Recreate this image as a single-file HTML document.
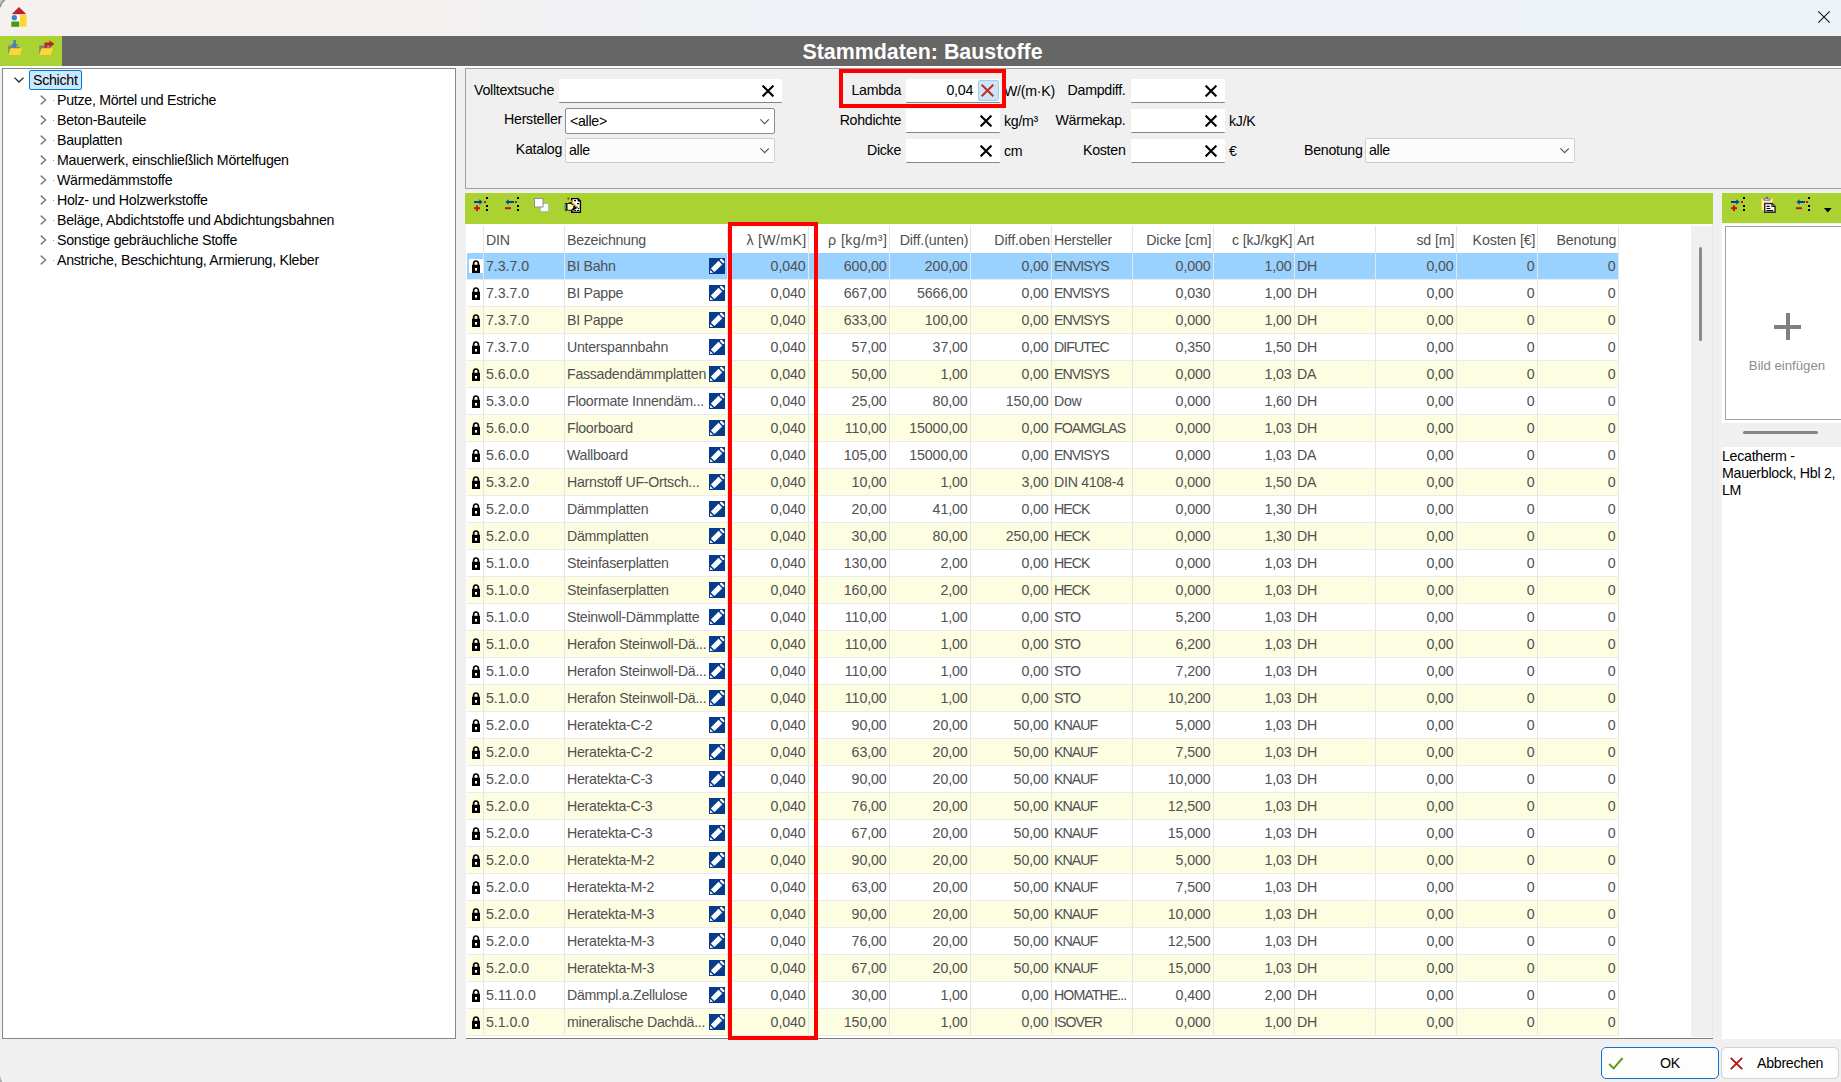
<!DOCTYPE html>
<html><head><meta charset="utf-8"><title>Stammdaten: Baustoffe</title>
<style>
*{box-sizing:border-box;margin:0;padding:0}
html,body{width:1841px;height:1082px;overflow:hidden}
body{position:relative;background:#f0f0f0;font-family:"Liberation Sans",sans-serif;font-size:14.2px;letter-spacing:-0.28px;color:#000}
.a{position:absolute}
svg{position:absolute;overflow:visible}
#tb{left:0;top:0;width:1841px;height:36px;background:linear-gradient(90deg,#f5f1ef 0%,#f5f1ee 19%,#f1f1f4 32%,#eef2f7 46%,#eef3f8 100%)}
#bar{left:0;top:36px;width:1841px;height:30px;background:#666}
#barg{left:0;top:36px;width:62px;height:30px;background:#aad332}
#wl{left:0;top:66px;width:1841px;height:2px;background:#fbfbfb}
#ttl{left:622.5px;top:36px;width:600px;height:30px;line-height:33px;text-align:center;color:#fff;font-weight:bold;font-size:21.4px;letter-spacing:0;white-space:nowrap}
#tree{left:2px;top:68px;width:454px;height:971px;background:#fff;border:1px solid #828790}
.ti{position:absolute;height:20px;line-height:20px;white-space:nowrap;left:57px}
#selbox{left:29px;top:70px;width:53px;height:20px;background:#cce8ff;border:1px solid #0078d4;border-radius:2px}
#filt{left:465px;top:68px;width:1380px;height:121px;border:1px solid #a0a0a0;border-right:0;background:#f0f0f0}
.lb{position:absolute;height:24px;line-height:24px;white-space:nowrap;text-align:right}
.in{position:absolute;height:24px;background:#fff;border-bottom:1px solid #868686;border-radius:1px}
.cb{position:absolute;height:25px;background:#fcfcfc;border:1px solid #d2d2d2;border-bottom-color:#c6c6c6;border-radius:2px;line-height:23px;padding-left:3px}
.un{position:absolute;height:24px;line-height:24px;white-space:nowrap}
.red{position:absolute;border:4px solid #fe0000}
#gbar{left:465px;top:193px;width:1248px;height:31px;background:#aad332}
#gbar2{left:1722px;top:193px;width:119px;height:30px;background:#aad332}
#tbl{left:466px;top:224px;width:1246px;height:814px;background:#fff;overflow:hidden}
#tblb{left:466px;top:1038px;width:1247px;height:1px;background:#7c7c7c}
.hd{position:absolute;top:2px;height:27px;line-height:28px;color:#505050;white-space:nowrap;overflow:hidden;font-style:normal}
.r{position:absolute;left:0;height:26px;width:1153px}
.c{position:absolute;top:0;height:26px;line-height:26px;font-style:normal;color:#505050;white-space:nowrap;overflow:hidden;padding:0 2px;background:#fff}
.y .c{background:#fdfde2}
.sel .c{background:#99d1ff}
.n{text-align:right;padding-right:2.4px;letter-spacing:-0.1px}
.hd.n{padding-right:1.6px}
.u{letter-spacing:-0.95px}
.c1{letter-spacing:-0.05px}
.c0{left:1px;width:16px}.c1{left:18px;width:80px}.c2{left:99px;width:162px}
.c3{left:262px;width:80px}.c4{left:343px;width:80px}.c5{left:424px;width:80px}.c6{left:505px;width:80px}
.c7{left:586px;width:80px}.c8{left:667px;width:80px}.c9{left:748px;width:80px}.c10{left:829px;width:80px}
.c11{left:910px;width:80px}.c12{left:991px;width:80px}.c13{left:1072px;width:80px}
.vl{position:absolute;top:2px;width:1px;height:810px;background:#e6e6e6}
.hl{position:absolute;left:1px;width:1152px;height:1px;background:#ebebeb}
.lk{position:absolute;left:5px;top:7px;width:8px;height:13px}
.sel .lk{box-shadow:none}
.lkbg{position:absolute;left:2px;top:6px;width:14px;height:14px;background:#fff}
.ed{position:absolute;left:144px;top:5px;width:16px;height:16px;background:#063b8e}
#strack{left:1691px;top:226px;width:20.5px;height:811px;background:#f0f0f0}
#sthumb{left:1699px;top:247px;width:3px;height:94px;background:#8b8b8b;border-radius:2px}
#rp1{left:1722px;top:224px;width:119px;height:199px;background:#fff}
#imgb{left:1725px;top:226px;width:130px;height:194px;border:1px solid #a0a0a0;background:#fff}
#split{left:1743px;top:431px;width:75px;height:3px;border-radius:2px;background:#858585}
#rp2{left:1722px;top:447px;width:119px;height:592px;background:#fff}
.btn{position:absolute;top:1047px;height:32px;border-radius:5px;background:#fdfdfd;line-height:30px;font-size:14.2px}
#tblr{left:1712px;top:224px;width:1px;height:814px;background:#e6e6e6}

</style></head><body>
<svg width="0" height="0" style="left:-10px;top:-10px">
<defs>
<symbol id="lk" viewBox="0 0 8 13"><path d="M1.6 5.2V3.6a2.4 2.6 0 0 1 4.8 0V5.2" fill="none" stroke="#000" stroke-width="1.7"/><rect x="0" y="4.8" width="8" height="8.2" fill="#000"/><rect x="3" y="8" width="2" height="2.6" fill="#fff"/></symbol>
<symbol id="ed" viewBox="0 0 16 16"><rect width="16" height="16" fill="#063b8e"/><polygon points="9.5,2.8 13.2,6.6 5.4,14 1.9,10.5" fill="#fff"/><polygon points="1.2,11.9 4.1,14.8 1,15" fill="#fff"/><path d="M12.2 1.9L14.3 4" stroke="#fff" stroke-width="2.3" stroke-linecap="round"/></symbol>
<symbol id="xb" viewBox="0 0 12 12"><path d="M0.6 0.6L11.4 11.4M11.4 0.6L0.6 11.4" stroke="#000" stroke-width="2.1"/></symbol>
<symbol id="chr" viewBox="0 0 7 10"><path d="M0.8 0.6L5.6 5L0.8 9.4" fill="none" stroke="#7c7c7c" stroke-width="1.45"/></symbol>
<symbol id="chd" viewBox="0 0 10 6"><path d="M0.5 0.6L5 5L9.5 0.6" fill="none" stroke="#222" stroke-width="1.3"/></symbol>
</defs></svg>
<div class="a" id="tb"></div>
<svg style="left:11px;top:7px" width="16" height="20" viewBox="0 0 16 20"><polygon points="8,0 15.6,7.4 0.4,7.4" fill="#c32026"/><rect x="0.3" y="7.4" width="15.4" height="12.4" fill="#fbfbfb"/><rect x="9" y="8" width="6.6" height="11.8" fill="#fdd835"/><circle cx="3.3" cy="10.8" r="2.7" fill="#3d85c6"/><rect x="0.3" y="14.5" width="8" height="5.3" fill="#4e9a06"/></svg>
<svg style="left:1818px;top:11px" width="12" height="12" viewBox="0 0 12 12"><path d="M0.3 0.3L11.7 11.7M11.7 0.3L0.3 11.7" stroke="#111" stroke-width="1.1" fill="none"/></svg>
<div class="a" id="bar"></div><div class="a" id="barg"></div>
<div class="a" id="wl"></div>
<div class="a" id="ttl">Stammdaten: Baustoffe</div>
<!-- bar icons -->
<svg style="left:7px;top:39px" width="18" height="18" viewBox="0 0 18 18"><polygon points="1.3,6.5 6,6.5 7,7.5 12.5,7.5 12.5,10 1.3,16" fill="#7d7d85"/><polygon points="3.4,9.2 15,9.2 13,16 1.2,16" fill="#fdd835"/><path d="M7.6 1v4.4" stroke="#3d7fc2" stroke-width="2.4"/><polygon points="4,5 11.2,5 7.6,8.8" fill="#3d7fc2"/></svg>
<svg style="left:38px;top:39px" width="18" height="18" viewBox="0 0 18 18"><polygon points="1.3,6.5 6,6.5 7,7.5 12.5,7.5 12.5,10 1.3,16" fill="#7d7d85"/><polygon points="3.4,9.2 15,9.2 13,16 1.2,16" fill="#fdd835"/><path d="M7.8 8.6V5h5" stroke="#c32026" stroke-width="2.8" fill="none"/><polygon points="11.4,1.2 16.3,5 11.4,8.8" fill="#c32026"/></svg>
<!-- tree -->
<div class="a" id="tree"></div>
<div class="a" id="selbox"></div>
<svg style="left:13.6px;top:77.1px" width="10" height="6"><use href="#chd"/></svg>
<div class="ti" style="left:33px;top:70px">Schicht</div>
<svg style="left:0;top:0" width="8" height="9" viewBox="0 0 8 9"><path d="M0 0H4.6Q1 1.8 0 7z" fill="#c9c9c9"/><path d="M0.2 7.2Q1.2 2 4.8 0" fill="none" stroke="#8e8e8e" stroke-width="1.5"/></svg>
<svg style="left:0;top:1074px" width="4" height="8" viewBox="0 0 4 8"><path d="M0 1.2Q.4 5 2.2 8H0z" fill="#a8a8a8"/></svg>
<svg style="left:40px;top:94.7px" width="7" height="10"><use href="#chr"/></svg><div class="a" style="left:53px;top:100px;width:1px;height:1px;background:#888"></div><div class="ti" style="top:90px">Putze, Mörtel und Estriche</div>
<svg style="left:40px;top:114.7px" width="7" height="10"><use href="#chr"/></svg><div class="a" style="left:53px;top:120px;width:1px;height:1px;background:#888"></div><div class="ti" style="top:110px">Beton-Bauteile</div>
<svg style="left:40px;top:134.7px" width="7" height="10"><use href="#chr"/></svg><div class="a" style="left:53px;top:140px;width:1px;height:1px;background:#888"></div><div class="ti" style="top:130px">Bauplatten</div>
<svg style="left:40px;top:154.7px" width="7" height="10"><use href="#chr"/></svg><div class="a" style="left:53px;top:160px;width:1px;height:1px;background:#888"></div><div class="ti" style="top:150px">Mauerwerk, einschließlich Mörtelfugen</div>
<svg style="left:40px;top:174.7px" width="7" height="10"><use href="#chr"/></svg><div class="a" style="left:53px;top:180px;width:1px;height:1px;background:#888"></div><div class="ti" style="top:170px">Wärmedämmstoffe</div>
<svg style="left:40px;top:194.7px" width="7" height="10"><use href="#chr"/></svg><div class="a" style="left:53px;top:200px;width:1px;height:1px;background:#888"></div><div class="ti" style="top:190px">Holz- und Holzwerkstoffe</div>
<svg style="left:40px;top:214.7px" width="7" height="10"><use href="#chr"/></svg><div class="a" style="left:53px;top:220px;width:1px;height:1px;background:#888"></div><div class="ti" style="top:210px">Beläge, Abdichtstoffe und Abdichtungsbahnen</div>
<svg style="left:40px;top:234.7px" width="7" height="10"><use href="#chr"/></svg><div class="a" style="left:53px;top:240px;width:1px;height:1px;background:#888"></div><div class="ti" style="top:230px">Sonstige gebräuchliche Stoffe</div>
<svg style="left:40px;top:254.7px" width="7" height="10"><use href="#chr"/></svg><div class="a" style="left:53px;top:260px;width:1px;height:1px;background:#888"></div><div class="ti" style="top:250px">Anstriche, Beschichtung, Armierung, Kleber</div>
<!-- filter panel -->
<div class="a" id="filt"></div>
<div class="lb" style="left:400px;width:154px;top:78px">Volltextsuche</div>
<div class="in" style="left:559px;top:79px;width:223px"></div>
<svg style="left:762px;top:85px" width="12" height="12"><use href="#xb"/></svg>
<div class="lb" style="left:400px;width:162px;top:107px">Hersteller</div>
<div class="cb" style="left:565px;top:108px;width:210px;height:26px;border-color:#8c8c8c;background:#fff;padding-left:4px;line-height:24px">&lt;alle&gt;</div>
<svg style="left:760px;top:119px" width="10" height="6" viewBox="0 0 10 6"><path d="M0.4 0.4L4.6 4.6L8.8 0.4" fill="none" stroke="#555" stroke-width="1.2"/></svg>
<div class="lb" style="left:400px;width:162px;top:137px">Katalog</div>
<div class="cb" style="left:565px;top:138px;width:210px;height:25px">alle</div>
<svg style="left:760px;top:148px" width="10" height="6" viewBox="0 0 10 6"><path d="M0.4 0.4L4.6 4.6L8.8 0.4" fill="none" stroke="#555" stroke-width="1.2"/></svg>

<div class="lb" style="left:800px;width:101px;top:78px">Lambda</div>
<div class="in" style="left:906px;top:79px;width:94px"></div>
<div class="lb" style="left:906px;width:67px;top:78px">0,04</div>
<div class="a" style="left:978px;top:80px;width:21px;height:21px;background:#cce4f7;border:1px solid #9ccbf0;border-radius:2px"></div>
<svg style="left:981px;top:84px" width="13" height="13" viewBox="0 0 13 13"><path d="M0.7 0.7L12.3 12.3M12.3 0.7L0.7 12.3" stroke="#c42b1c" stroke-width="2"/></svg>
<div class="un" style="left:1004px;top:78.5px">W/(m·K)</div>
<div class="lb" style="left:800px;width:101px;top:108px">Rohdichte</div>
<div class="in" style="left:906px;top:109px;width:94px"></div>
<svg style="left:980px;top:115px" width="12" height="12"><use href="#xb"/></svg>
<div class="un" style="left:1004px;top:108.5px">kg/m³</div>
<div class="lb" style="left:800px;width:101px;top:138px">Dicke</div>
<div class="in" style="left:906px;top:139px;width:94px"></div>
<svg style="left:980px;top:145px" width="12" height="12"><use href="#xb"/></svg>
<div class="un" style="left:1004px;top:138.5px">cm</div>

<div class="lb" style="left:1020px;width:105.5px;top:78px">Dampdiff.</div>
<div class="in" style="left:1131px;top:79px;width:94px"></div>
<svg style="left:1205px;top:85px" width="12" height="12"><use href="#xb"/></svg>
<div class="lb" style="left:1020px;width:105.5px;top:108px">Wärmekap.</div>
<div class="in" style="left:1131px;top:109px;width:94px"></div>
<svg style="left:1205px;top:115px" width="12" height="12"><use href="#xb"/></svg>
<div class="un" style="left:1229px;top:108.5px">kJ/K</div>
<div class="lb" style="left:1020px;width:105.5px;top:138px">Kosten</div>
<div class="in" style="left:1131px;top:139px;width:94px"></div>
<svg style="left:1205px;top:145px" width="12" height="12"><use href="#xb"/></svg>
<div class="un" style="left:1229px;top:138.5px">€</div>

<div class="lb" style="left:1260px;width:102.5px;top:137.5px">Benotung</div>
<div class="cb" style="left:1365px;top:138px;width:210px;height:25px">alle</div>
<svg style="left:1560px;top:148px" width="10" height="6" viewBox="0 0 10 6"><path d="M0.4 0.4L4.6 4.6L8.8 0.4" fill="none" stroke="#555" stroke-width="1.2"/></svg>
<div class="red" style="left:839px;top:69px;width:167px;height:39px"></div>
<!-- green toolbars -->
<div class="a" id="gbar"></div><div class="a" id="gbar2"></div>
<svg width="0" height="0" style="left:-20px;top:-20px"><defs>
<symbol id="iadd" viewBox="0 0 16 16"><rect x="1" y="5" width="6" height="2" fill="#0a3fa0"/><polygon points="6.4,3.3 9.5,6 6.4,8.7" fill="#0a3fa0"/><rect x="11" y="5" width="2" height="2" fill="#c4141c"/><rect x="13" y="1" width="2" height="2"/><rect x="13" y="9" width="2" height="2"/><rect x="13" y="13" width="2" height="2"/><rect x="1" y="11.2" width="6" height="2" fill="#c4141c"/><rect x="3" y="9.3" width="2" height="5.8" fill="#c4141c"/></symbol>
<symbol id="idel" viewBox="0 0 16 16"><rect x="4" y="5" width="6" height="2" fill="#0a3fa0"/><polygon points="4.6,3.3 1.5,6 4.6,8.7" fill="#0a3fa0"/><rect x="11" y="5" width="2" height="2" fill="#c4141c"/><rect x="13" y="1" width="2" height="2"/><rect x="13" y="9" width="2" height="2"/><rect x="13" y="13" width="2" height="2"/><rect x="1" y="11.2" width="6" height="2" fill="#c4141c"/></symbol>
</defs></svg>
<svg style="left:473px;top:196px" width="16" height="16"><use href="#iadd"/></svg>
<svg style="left:504px;top:196px" width="16" height="16"><use href="#idel"/></svg>
<svg style="left:533px;top:197px" width="17" height="16" viewBox="0 0 17 16"><rect x="7.5" y="6.5" width="8" height="8" fill="#fff" stroke="#b9b9b9"/><rect x="1.5" y="1.5" width="8.5" height="8.5" fill="#fff" stroke="#8e8e9a"/></svg>
<svg style="left:564px;top:196px" width="18" height="18" viewBox="0 0 18 18"><polygon points="7.7,2.6 14,2.6 16.4,5.1 16.4,16.3 7.7,16.3" fill="#fff" stroke="#000" stroke-width="1.4"/><polygon points="13.6,2.6 16.4,5.4 13.6,5.4" fill="#000"/><path d="M10 4.6h2M13 7.6h2M10.4 14.5h1.8M13 14.5h2M14 12.5h1" stroke="#000" stroke-width="1.1"/><polygon points="8,8.6 13.6,11.8 8.6,15" fill="#000"/><rect x="0.8" y="7.1" width="2.4" height="7.6" fill="#000"/><rect x="1.1" y="7.9" width="1.3" height="6" fill="#3f93dc"/><path d="M3 7.7l3.2-.6 4.4 2.5-1.4 1.3 1.3 1.1-2.1.9-.4 1.4H4.6L3 13.6z" fill="#fdf6b4" stroke="#000" stroke-width=".9"/><path d="M5 7.3c1-.5 2-.4 2.6 0" stroke="#000" stroke-width="1.2" fill="none"/><path d="M4.8 2.8L13 11" stroke="#e6b01e" stroke-width="1.5" stroke-dasharray="1.1 .35"/><circle cx="4.4" cy="2.4" r="1" fill="#ae1d1d"/><circle cx="13.2" cy="11.3" r=".9" fill="#8a6a10"/></svg>
<svg style="left:1730px;top:196px" width="16" height="16"><use href="#iadd"/></svg>
<svg style="left:1760px;top:196px" width="17" height="18" viewBox="0 0 17 18"><rect x="1.6" y="2.5" width="11" height="12" fill="#fff6bd" stroke="#ffcb26" stroke-width="1"/><rect x="6" y="0.9" width="2" height="1.6" fill="#5c5c7c"/><rect x="3.2" y="2.2" width="7.4" height="2.6" rx="1.2" fill="#72728f"/><rect x="4.6" y="3" width="4.6" height=".9" fill="#c9c9d9"/><polygon points="4.7,7.5 12,7.5 15.1,10.6 15.1,16.3 4.7,16.3" fill="#fff" stroke="#2a2a2a" stroke-width="1.5"/><polygon points="11.4,7.4 15.2,11 11.4,11" fill="#1c1c1c"/><rect x="12.4" y="9" width=".9" height=".9" fill="#fff"/><path d="M6.5 10.3h3.2M6.5 12.5h3.8M6.5 14.6h6.6" stroke="#000" stroke-width="1.15"/></svg>
<svg style="left:1795px;top:196px" width="16" height="16"><use href="#idel"/></svg>
<svg style="left:1824px;top:207.5px" width="8" height="5" viewBox="0 0 8 5"><polygon points="0,0 7.6,0 3.8,4.4" fill="#000"/></svg>
<!-- table -->
<div class="a" id="tbl">
<i class="hd" style="left:20px">DIN</i><i class="hd" style="left:101px">Bezeichnung</i>
<i class="hd n" style="left:262px;width:80px;letter-spacing:.3px">λ [W/mK]</i><i class="hd n" style="left:343px;width:80px;letter-spacing:.45px">ρ [kg/m³]</i>
<i class="hd n" style="left:424px;width:80px">Diff.(unten)</i><i class="hd n" style="left:505px;width:80px;padding-right:1px">Diff.oben</i>
<i class="hd" style="left:588px">Hersteller</i><i class="hd n" style="left:667px;width:80px">Dicke [cm]</i>
<i class="hd n" style="left:748px;width:80px">c [kJ/kgK]</i><i class="hd" style="left:831px">Art</i>
<i class="hd n" style="left:910px;width:80px">sd [m]</i><i class="hd n" style="left:991px;width:80px">Kosten [€]</i>
<i class="hd n" style="left:1072px;width:80px">Benotung</i>
<b class="vl" style="left:17px"></b><b class="vl" style="left:98px"></b><b class="vl" style="left:261px"></b><b class="vl" style="left:342px"></b><b class="vl" style="left:423px"></b><b class="vl" style="left:504px"></b><b class="vl" style="left:585px"></b><b class="vl" style="left:666px"></b><b class="vl" style="left:747px"></b><b class="vl" style="left:828px"></b><b class="vl" style="left:909px"></b><b class="vl" style="left:990px"></b><b class="vl" style="left:1071px"></b><b class="vl" style="left:1152px"></b><b class="hl" style="top:55px"></b><b class="hl" style="top:82px"></b><b class="hl" style="top:109px"></b><b class="hl" style="top:136px"></b><b class="hl" style="top:163px"></b><b class="hl" style="top:190px"></b><b class="hl" style="top:217px"></b><b class="hl" style="top:244px"></b><b class="hl" style="top:271px"></b><b class="hl" style="top:298px"></b><b class="hl" style="top:325px"></b><b class="hl" style="top:352px"></b><b class="hl" style="top:379px"></b><b class="hl" style="top:406px"></b><b class="hl" style="top:433px"></b><b class="hl" style="top:460px"></b><b class="hl" style="top:487px"></b><b class="hl" style="top:514px"></b><b class="hl" style="top:541px"></b><b class="hl" style="top:568px"></b><b class="hl" style="top:595px"></b><b class="hl" style="top:622px"></b><b class="hl" style="top:649px"></b><b class="hl" style="top:676px"></b><b class="hl" style="top:703px"></b><b class="hl" style="top:730px"></b><b class="hl" style="top:757px"></b><b class="hl" style="top:784px"></b><b class="hl" style="top:811px"></b>
<div class="r sel" style="top:29px"><i class="c c0"><b class="lkbg"></b><svg class="lk"><use href="#lk"/></svg></i><i class="c c1">7.3.7.0</i><i class="c c2">BI Bahn<svg class="ed"><use href="#ed"/></svg></i><i class="c c3 n">0,040</i><i class="c c4 n">600,00</i><i class="c c5 n">200,00</i><i class="c c6 n">0,00</i><i class="c c7 u">ENVISYS</i><i class="c c8 n">0,000</i><i class="c c9 n">1,00</i><i class="c c10">DH</i><i class="c c11 n">0,00</i><i class="c c12 n">0</i><i class="c c13 n">0</i></div>
<div class="r" style="top:56px"><i class="c c0"><svg class="lk"><use href="#lk"/></svg></i><i class="c c1">7.3.7.0</i><i class="c c2">BI Pappe<svg class="ed"><use href="#ed"/></svg></i><i class="c c3 n">0,040</i><i class="c c4 n">667,00</i><i class="c c5 n">5666,00</i><i class="c c6 n">0,00</i><i class="c c7 u">ENVISYS</i><i class="c c8 n">0,030</i><i class="c c9 n">1,00</i><i class="c c10">DH</i><i class="c c11 n">0,00</i><i class="c c12 n">0</i><i class="c c13 n">0</i></div>
<div class="r y" style="top:83px"><i class="c c0"><svg class="lk"><use href="#lk"/></svg></i><i class="c c1">7.3.7.0</i><i class="c c2">BI Pappe<svg class="ed"><use href="#ed"/></svg></i><i class="c c3 n">0,040</i><i class="c c4 n">633,00</i><i class="c c5 n">100,00</i><i class="c c6 n">0,00</i><i class="c c7 u">ENVISYS</i><i class="c c8 n">0,000</i><i class="c c9 n">1,00</i><i class="c c10">DH</i><i class="c c11 n">0,00</i><i class="c c12 n">0</i><i class="c c13 n">0</i></div>
<div class="r" style="top:110px"><i class="c c0"><svg class="lk"><use href="#lk"/></svg></i><i class="c c1">7.3.7.0</i><i class="c c2">Unterspannbahn<svg class="ed"><use href="#ed"/></svg></i><i class="c c3 n">0,040</i><i class="c c4 n">57,00</i><i class="c c5 n">37,00</i><i class="c c6 n">0,00</i><i class="c c7 u">DIFUTEC</i><i class="c c8 n">0,350</i><i class="c c9 n">1,50</i><i class="c c10">DH</i><i class="c c11 n">0,00</i><i class="c c12 n">0</i><i class="c c13 n">0</i></div>
<div class="r y" style="top:137px"><i class="c c0"><svg class="lk"><use href="#lk"/></svg></i><i class="c c1">5.6.0.0</i><i class="c c2">Fassadendämmplatten<svg class="ed"><use href="#ed"/></svg></i><i class="c c3 n">0,040</i><i class="c c4 n">50,00</i><i class="c c5 n">1,00</i><i class="c c6 n">0,00</i><i class="c c7 u">ENVISYS</i><i class="c c8 n">0,000</i><i class="c c9 n">1,03</i><i class="c c10">DA</i><i class="c c11 n">0,00</i><i class="c c12 n">0</i><i class="c c13 n">0</i></div>
<div class="r" style="top:164px"><i class="c c0"><svg class="lk"><use href="#lk"/></svg></i><i class="c c1">5.3.0.0</i><i class="c c2">Floormate Innendäm...<svg class="ed"><use href="#ed"/></svg></i><i class="c c3 n">0,040</i><i class="c c4 n">25,00</i><i class="c c5 n">80,00</i><i class="c c6 n">150,00</i><i class="c c7">Dow</i><i class="c c8 n">0,000</i><i class="c c9 n">1,60</i><i class="c c10">DH</i><i class="c c11 n">0,00</i><i class="c c12 n">0</i><i class="c c13 n">0</i></div>
<div class="r y" style="top:191px"><i class="c c0"><svg class="lk"><use href="#lk"/></svg></i><i class="c c1">5.6.0.0</i><i class="c c2">Floorboard<svg class="ed"><use href="#ed"/></svg></i><i class="c c3 n">0,040</i><i class="c c4 n">110,00</i><i class="c c5 n">15000,00</i><i class="c c6 n">0,00</i><i class="c c7 u">FOAMGLAS</i><i class="c c8 n">0,000</i><i class="c c9 n">1,03</i><i class="c c10">DH</i><i class="c c11 n">0,00</i><i class="c c12 n">0</i><i class="c c13 n">0</i></div>
<div class="r" style="top:218px"><i class="c c0"><svg class="lk"><use href="#lk"/></svg></i><i class="c c1">5.6.0.0</i><i class="c c2">Wallboard<svg class="ed"><use href="#ed"/></svg></i><i class="c c3 n">0,040</i><i class="c c4 n">105,00</i><i class="c c5 n">15000,00</i><i class="c c6 n">0,00</i><i class="c c7 u">ENVISYS</i><i class="c c8 n">0,000</i><i class="c c9 n">1,03</i><i class="c c10">DA</i><i class="c c11 n">0,00</i><i class="c c12 n">0</i><i class="c c13 n">0</i></div>
<div class="r y" style="top:245px"><i class="c c0"><svg class="lk"><use href="#lk"/></svg></i><i class="c c1">5.3.2.0</i><i class="c c2">Harnstoff UF-Ortsch...<svg class="ed"><use href="#ed"/></svg></i><i class="c c3 n">0,040</i><i class="c c4 n">10,00</i><i class="c c5 n">1,00</i><i class="c c6 n">3,00</i><i class="c c7">DIN 4108-4</i><i class="c c8 n">0,000</i><i class="c c9 n">1,50</i><i class="c c10">DA</i><i class="c c11 n">0,00</i><i class="c c12 n">0</i><i class="c c13 n">0</i></div>
<div class="r" style="top:272px"><i class="c c0"><svg class="lk"><use href="#lk"/></svg></i><i class="c c1">5.2.0.0</i><i class="c c2">Dämmplatten<svg class="ed"><use href="#ed"/></svg></i><i class="c c3 n">0,040</i><i class="c c4 n">20,00</i><i class="c c5 n">41,00</i><i class="c c6 n">0,00</i><i class="c c7 u">HECK</i><i class="c c8 n">0,000</i><i class="c c9 n">1,30</i><i class="c c10">DH</i><i class="c c11 n">0,00</i><i class="c c12 n">0</i><i class="c c13 n">0</i></div>
<div class="r y" style="top:299px"><i class="c c0"><svg class="lk"><use href="#lk"/></svg></i><i class="c c1">5.2.0.0</i><i class="c c2">Dämmplatten<svg class="ed"><use href="#ed"/></svg></i><i class="c c3 n">0,040</i><i class="c c4 n">30,00</i><i class="c c5 n">80,00</i><i class="c c6 n">250,00</i><i class="c c7 u">HECK</i><i class="c c8 n">0,000</i><i class="c c9 n">1,30</i><i class="c c10">DH</i><i class="c c11 n">0,00</i><i class="c c12 n">0</i><i class="c c13 n">0</i></div>
<div class="r" style="top:326px"><i class="c c0"><svg class="lk"><use href="#lk"/></svg></i><i class="c c1">5.1.0.0</i><i class="c c2">Steinfaserplatten<svg class="ed"><use href="#ed"/></svg></i><i class="c c3 n">0,040</i><i class="c c4 n">130,00</i><i class="c c5 n">2,00</i><i class="c c6 n">0,00</i><i class="c c7 u">HECK</i><i class="c c8 n">0,000</i><i class="c c9 n">1,03</i><i class="c c10">DH</i><i class="c c11 n">0,00</i><i class="c c12 n">0</i><i class="c c13 n">0</i></div>
<div class="r y" style="top:353px"><i class="c c0"><svg class="lk"><use href="#lk"/></svg></i><i class="c c1">5.1.0.0</i><i class="c c2">Steinfaserplatten<svg class="ed"><use href="#ed"/></svg></i><i class="c c3 n">0,040</i><i class="c c4 n">160,00</i><i class="c c5 n">2,00</i><i class="c c6 n">0,00</i><i class="c c7 u">HECK</i><i class="c c8 n">0,000</i><i class="c c9 n">1,03</i><i class="c c10">DH</i><i class="c c11 n">0,00</i><i class="c c12 n">0</i><i class="c c13 n">0</i></div>
<div class="r" style="top:380px"><i class="c c0"><svg class="lk"><use href="#lk"/></svg></i><i class="c c1">5.1.0.0</i><i class="c c2">Steinwoll-Dämmplatte<svg class="ed"><use href="#ed"/></svg></i><i class="c c3 n">0,040</i><i class="c c4 n">110,00</i><i class="c c5 n">1,00</i><i class="c c6 n">0,00</i><i class="c c7 u">STO</i><i class="c c8 n">5,200</i><i class="c c9 n">1,03</i><i class="c c10">DH</i><i class="c c11 n">0,00</i><i class="c c12 n">0</i><i class="c c13 n">0</i></div>
<div class="r y" style="top:407px"><i class="c c0"><svg class="lk"><use href="#lk"/></svg></i><i class="c c1">5.1.0.0</i><i class="c c2">Herafon Steinwoll-Dä...<svg class="ed"><use href="#ed"/></svg></i><i class="c c3 n">0,040</i><i class="c c4 n">110,00</i><i class="c c5 n">1,00</i><i class="c c6 n">0,00</i><i class="c c7 u">STO</i><i class="c c8 n">6,200</i><i class="c c9 n">1,03</i><i class="c c10">DH</i><i class="c c11 n">0,00</i><i class="c c12 n">0</i><i class="c c13 n">0</i></div>
<div class="r" style="top:434px"><i class="c c0"><svg class="lk"><use href="#lk"/></svg></i><i class="c c1">5.1.0.0</i><i class="c c2">Herafon Steinwoll-Dä...<svg class="ed"><use href="#ed"/></svg></i><i class="c c3 n">0,040</i><i class="c c4 n">110,00</i><i class="c c5 n">1,00</i><i class="c c6 n">0,00</i><i class="c c7 u">STO</i><i class="c c8 n">7,200</i><i class="c c9 n">1,03</i><i class="c c10">DH</i><i class="c c11 n">0,00</i><i class="c c12 n">0</i><i class="c c13 n">0</i></div>
<div class="r y" style="top:461px"><i class="c c0"><svg class="lk"><use href="#lk"/></svg></i><i class="c c1">5.1.0.0</i><i class="c c2">Herafon Steinwoll-Dä...<svg class="ed"><use href="#ed"/></svg></i><i class="c c3 n">0,040</i><i class="c c4 n">110,00</i><i class="c c5 n">1,00</i><i class="c c6 n">0,00</i><i class="c c7 u">STO</i><i class="c c8 n">10,200</i><i class="c c9 n">1,03</i><i class="c c10">DH</i><i class="c c11 n">0,00</i><i class="c c12 n">0</i><i class="c c13 n">0</i></div>
<div class="r" style="top:488px"><i class="c c0"><svg class="lk"><use href="#lk"/></svg></i><i class="c c1">5.2.0.0</i><i class="c c2">Heratekta-C-2<svg class="ed"><use href="#ed"/></svg></i><i class="c c3 n">0,040</i><i class="c c4 n">90,00</i><i class="c c5 n">20,00</i><i class="c c6 n">50,00</i><i class="c c7 u">KNAUF</i><i class="c c8 n">5,000</i><i class="c c9 n">1,03</i><i class="c c10">DH</i><i class="c c11 n">0,00</i><i class="c c12 n">0</i><i class="c c13 n">0</i></div>
<div class="r y" style="top:515px"><i class="c c0"><svg class="lk"><use href="#lk"/></svg></i><i class="c c1">5.2.0.0</i><i class="c c2">Heratekta-C-2<svg class="ed"><use href="#ed"/></svg></i><i class="c c3 n">0,040</i><i class="c c4 n">63,00</i><i class="c c5 n">20,00</i><i class="c c6 n">50,00</i><i class="c c7 u">KNAUF</i><i class="c c8 n">7,500</i><i class="c c9 n">1,03</i><i class="c c10">DH</i><i class="c c11 n">0,00</i><i class="c c12 n">0</i><i class="c c13 n">0</i></div>
<div class="r" style="top:542px"><i class="c c0"><svg class="lk"><use href="#lk"/></svg></i><i class="c c1">5.2.0.0</i><i class="c c2">Heratekta-C-3<svg class="ed"><use href="#ed"/></svg></i><i class="c c3 n">0,040</i><i class="c c4 n">90,00</i><i class="c c5 n">20,00</i><i class="c c6 n">50,00</i><i class="c c7 u">KNAUF</i><i class="c c8 n">10,000</i><i class="c c9 n">1,03</i><i class="c c10">DH</i><i class="c c11 n">0,00</i><i class="c c12 n">0</i><i class="c c13 n">0</i></div>
<div class="r y" style="top:569px"><i class="c c0"><svg class="lk"><use href="#lk"/></svg></i><i class="c c1">5.2.0.0</i><i class="c c2">Heratekta-C-3<svg class="ed"><use href="#ed"/></svg></i><i class="c c3 n">0,040</i><i class="c c4 n">76,00</i><i class="c c5 n">20,00</i><i class="c c6 n">50,00</i><i class="c c7 u">KNAUF</i><i class="c c8 n">12,500</i><i class="c c9 n">1,03</i><i class="c c10">DH</i><i class="c c11 n">0,00</i><i class="c c12 n">0</i><i class="c c13 n">0</i></div>
<div class="r" style="top:596px"><i class="c c0"><svg class="lk"><use href="#lk"/></svg></i><i class="c c1">5.2.0.0</i><i class="c c2">Heratekta-C-3<svg class="ed"><use href="#ed"/></svg></i><i class="c c3 n">0,040</i><i class="c c4 n">67,00</i><i class="c c5 n">20,00</i><i class="c c6 n">50,00</i><i class="c c7 u">KNAUF</i><i class="c c8 n">15,000</i><i class="c c9 n">1,03</i><i class="c c10">DH</i><i class="c c11 n">0,00</i><i class="c c12 n">0</i><i class="c c13 n">0</i></div>
<div class="r y" style="top:623px"><i class="c c0"><svg class="lk"><use href="#lk"/></svg></i><i class="c c1">5.2.0.0</i><i class="c c2">Heratekta-M-2<svg class="ed"><use href="#ed"/></svg></i><i class="c c3 n">0,040</i><i class="c c4 n">90,00</i><i class="c c5 n">20,00</i><i class="c c6 n">50,00</i><i class="c c7 u">KNAUF</i><i class="c c8 n">5,000</i><i class="c c9 n">1,03</i><i class="c c10">DH</i><i class="c c11 n">0,00</i><i class="c c12 n">0</i><i class="c c13 n">0</i></div>
<div class="r" style="top:650px"><i class="c c0"><svg class="lk"><use href="#lk"/></svg></i><i class="c c1">5.2.0.0</i><i class="c c2">Heratekta-M-2<svg class="ed"><use href="#ed"/></svg></i><i class="c c3 n">0,040</i><i class="c c4 n">63,00</i><i class="c c5 n">20,00</i><i class="c c6 n">50,00</i><i class="c c7 u">KNAUF</i><i class="c c8 n">7,500</i><i class="c c9 n">1,03</i><i class="c c10">DH</i><i class="c c11 n">0,00</i><i class="c c12 n">0</i><i class="c c13 n">0</i></div>
<div class="r y" style="top:677px"><i class="c c0"><svg class="lk"><use href="#lk"/></svg></i><i class="c c1">5.2.0.0</i><i class="c c2">Heratekta-M-3<svg class="ed"><use href="#ed"/></svg></i><i class="c c3 n">0,040</i><i class="c c4 n">90,00</i><i class="c c5 n">20,00</i><i class="c c6 n">50,00</i><i class="c c7 u">KNAUF</i><i class="c c8 n">10,000</i><i class="c c9 n">1,03</i><i class="c c10">DH</i><i class="c c11 n">0,00</i><i class="c c12 n">0</i><i class="c c13 n">0</i></div>
<div class="r" style="top:704px"><i class="c c0"><svg class="lk"><use href="#lk"/></svg></i><i class="c c1">5.2.0.0</i><i class="c c2">Heratekta-M-3<svg class="ed"><use href="#ed"/></svg></i><i class="c c3 n">0,040</i><i class="c c4 n">76,00</i><i class="c c5 n">20,00</i><i class="c c6 n">50,00</i><i class="c c7 u">KNAUF</i><i class="c c8 n">12,500</i><i class="c c9 n">1,03</i><i class="c c10">DH</i><i class="c c11 n">0,00</i><i class="c c12 n">0</i><i class="c c13 n">0</i></div>
<div class="r y" style="top:731px"><i class="c c0"><svg class="lk"><use href="#lk"/></svg></i><i class="c c1">5.2.0.0</i><i class="c c2">Heratekta-M-3<svg class="ed"><use href="#ed"/></svg></i><i class="c c3 n">0,040</i><i class="c c4 n">67,00</i><i class="c c5 n">20,00</i><i class="c c6 n">50,00</i><i class="c c7 u">KNAUF</i><i class="c c8 n">15,000</i><i class="c c9 n">1,03</i><i class="c c10">DH</i><i class="c c11 n">0,00</i><i class="c c12 n">0</i><i class="c c13 n">0</i></div>
<div class="r" style="top:758px"><i class="c c0"><svg class="lk"><use href="#lk"/></svg></i><i class="c c1">5.11.0.0</i><i class="c c2">Dämmpl.a.Zellulose<svg class="ed"><use href="#ed"/></svg></i><i class="c c3 n">0,040</i><i class="c c4 n">30,00</i><i class="c c5 n">1,00</i><i class="c c6 n">0,00</i><i class="c c7 u">HOMATHE...</i><i class="c c8 n">0,400</i><i class="c c9 n">2,00</i><i class="c c10">DH</i><i class="c c11 n">0,00</i><i class="c c12 n">0</i><i class="c c13 n">0</i></div>
<div class="r y" style="top:785px"><i class="c c0"><svg class="lk"><use href="#lk"/></svg></i><i class="c c1">5.1.0.0</i><i class="c c2">mineralische Dachdä...<svg class="ed"><use href="#ed"/></svg></i><i class="c c3 n">0,040</i><i class="c c4 n">150,00</i><i class="c c5 n">1,00</i><i class="c c6 n">0,00</i><i class="c c7 u">ISOVER</i><i class="c c8 n">0,000</i><i class="c c9 n">1,00</i><i class="c c10">DH</i><i class="c c11 n">0,00</i><i class="c c12 n">0</i><i class="c c13 n">0</i></div>
</div>
<div class="a" id="tblb"></div><div class="a" id="tblr"></div>
<div class="a" id="strack"></div><div class="a" id="sthumb"></div>
<div class="red" style="left:728px;top:222px;width:90px;height:818px"></div>
<!-- right panel -->
<div class="a" id="rp1"></div><div class="a" id="imgb"></div>
<div class="a" style="left:1774px;top:324.5px;width:27px;height:4px;background:#808080"></div>
<div class="a" style="left:1785.5px;top:313px;width:4px;height:27px;background:#808080"></div>
<div class="a" style="left:1737px;top:356px;width:100px;height:20px;line-height:20px;text-align:center;color:#8c8c8c;font-size:13.2px;letter-spacing:0">Bild einfügen</div>
<div class="a" id="split"></div>
<div class="a" id="rp2"></div>
<div class="a" style="left:1722px;top:448px;width:125px;line-height:17px;white-space:nowrap">Lecatherm -<br>Mauerblock, Hbl 2,<br>LM</div>
<!-- buttons -->
<div class="btn" style="left:1601px;width:118px;border:1.5px solid #0b74d0"></div>
<svg style="left:1608px;top:1056px" width="16" height="14" viewBox="0 0 16 14"><path d="M1.2 8L5.6 12.4L14.6 2" fill="none" stroke="#5c9e13" stroke-width="2"/></svg>
<div class="a" style="left:1640px;top:1047px;width:60px;height:32px;line-height:32px;text-align:center">OK</div>
<div class="btn" style="left:1721px;width:117.5px;border:1px solid #d2d2d2"></div>
<svg style="left:1730px;top:1057px" width="13" height="13" viewBox="0 0 13 13"><path d="M0.8 0.8L12.2 12.2M12.2 0.8L0.8 12.2" stroke="#b21616" stroke-width="1.9"/></svg>
<div class="a" style="left:1757px;top:1047px;width:80px;height:32px;line-height:32px;white-space:nowrap">Abbrechen</div>
</body></html>
